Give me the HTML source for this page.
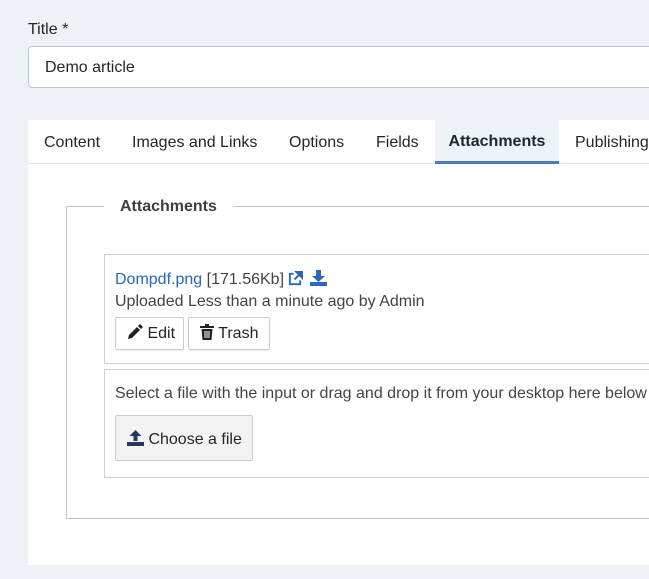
<!DOCTYPE html>
<html><head><style>
*{box-sizing:border-box;margin:0;padding:0}
body{width:649px;height:579px;overflow:hidden;background:#eef2f7;font-family:"Liberation Sans",sans-serif;color:#22262a;position:relative;font-size:16px}
.abs{position:absolute}
.lbl{left:28px;top:21px;font-size:16px}
.inp{left:28px;top:46px;width:640px;height:42px;background:#fff;border:1px solid #b8c6dc;border-radius:4px;padding:12px 16px;font-size:16px}
.card{left:28px;top:120px;width:640px;height:445px;background:#fff}
.tabs{left:28px;top:120px;width:640px;height:44px;border-bottom:1px solid #dfe3e8}
.tab{position:absolute;top:1px;height:43px;line-height:43px;font-size:16px;color:#22262a}
.act{top:0;line-height:44px;background:#eef3f8;font-weight:bold;border-bottom:3px solid #4a7bc0;height:44px}
.fs{left:66px;top:206px;width:620px;height:313px;border:1px solid #b8c6dc}
.lg{left:104px;top:198px;background:#fff;padding:0 16px;font-weight:bold;font-size:16px;color:#3a3f45}
.box{left:104px;width:600px;border:1px solid #d0d0d0}
.btn{position:absolute;border:1px solid #ccc;border-radius:2px;background:#fff;font-size:16px;box-shadow:0 1px 1px rgba(0,0,0,.08)}
a{color:#2a69b8;text-decoration:none}
</style></head><body>
<div class="abs lbl">Title *</div>
<div class="abs inp">Demo article</div>
<div class="abs card"></div>
<div class="abs tabs">
<div class="tab" style="left:16px">Content</div>
<div class="tab" style="left:104px">Images and Links</div>
<div class="tab" style="left:261px">Options</div>
<div class="tab" style="left:348px">Fields</div>
<div class="tab act" style="left:407px;width:124px;text-align:center">Attachments</div>
<div class="tab" style="left:547px">Publishing</div>
</div>
<div class="abs fs"></div>
<div class="abs lg">Attachments</div>
<div class="abs box" style="top:254px;height:110px">
 <div class="abs" style="left:10px;top:15px;white-space:nowrap;color:#444"><a>Dompdf.png</a> [171.56Kb]
 <svg width="15" height="15" viewBox="0 0 16 16" style="vertical-align:-2px;margin-left:0px"><path d="M6 3H2v11h11v-4" fill="none" stroke="#2a69b8" stroke-width="2"/><path d="M9 1h6v6zM15 1L7 9" stroke="#2a69b8" stroke-width="2.2" fill="#2a69b8"/></svg>
 <svg width="17" height="16" viewBox="0 0 17 16" style="vertical-align:-2px;margin-left:2px"><path d="M6 0h5v6h4l-6.5 6L2 6h4z" fill="#2a69b8"/><rect x="0" y="12" width="17" height="4" fill="#2a69b8"/></svg></div>
 <div class="abs" style="left:10px;top:38px;white-space:nowrap;color:#444;font-size:16px">Uploaded Less than a minute ago by Admin</div>
 <div class="btn" style="left:10px;top:62px;width:69px;height:33px;padding:6px 0 0 11px"><svg width="16" height="16" viewBox="0 0 16 16" style="vertical-align:-2px"><path d="M1 15l1-4 8-8 3 3-8 8zM11 2l2-2 3 3-2 2z" fill="#222"/></svg> Edit</div>
 <div class="btn" style="left:83px;top:62px;width:82px;height:33px;padding:6px 0 0 11px"><svg width="14" height="16" viewBox="0 0 14 16" style="vertical-align:-2px"><path d="M0 2h14v2H0zM5 0h4v2H5zM1.5 5h11l-1 11h-9z" fill="#222"/><path d="M5 7v7M7 7v7M9 7v7" stroke="#fff" stroke-width="1"/></svg> Trash</div>
</div>
<div class="abs box" style="top:369px;height:109px">
 <div class="abs" style="left:10px;top:15px;white-space:nowrap;color:#444;font-size:16px">Select a file with the input or drag and drop it from your desktop here below</div>
 <div class="btn" style="left:10px;top:45px;width:138px;height:46px;background:#f3f3f3;padding:14px 0 0 11px;box-shadow:none"><svg width="17" height="16" viewBox="0 0 17 16" style="vertical-align:-2px"><path d="M8.5 0l6 6h-4v5h-4V6h-4z" fill="#1f3a5a"/><rect x="0" y="12" width="17" height="4" fill="#1f3a5a"/></svg> Choose a file</div>
</div>
</body></html>
